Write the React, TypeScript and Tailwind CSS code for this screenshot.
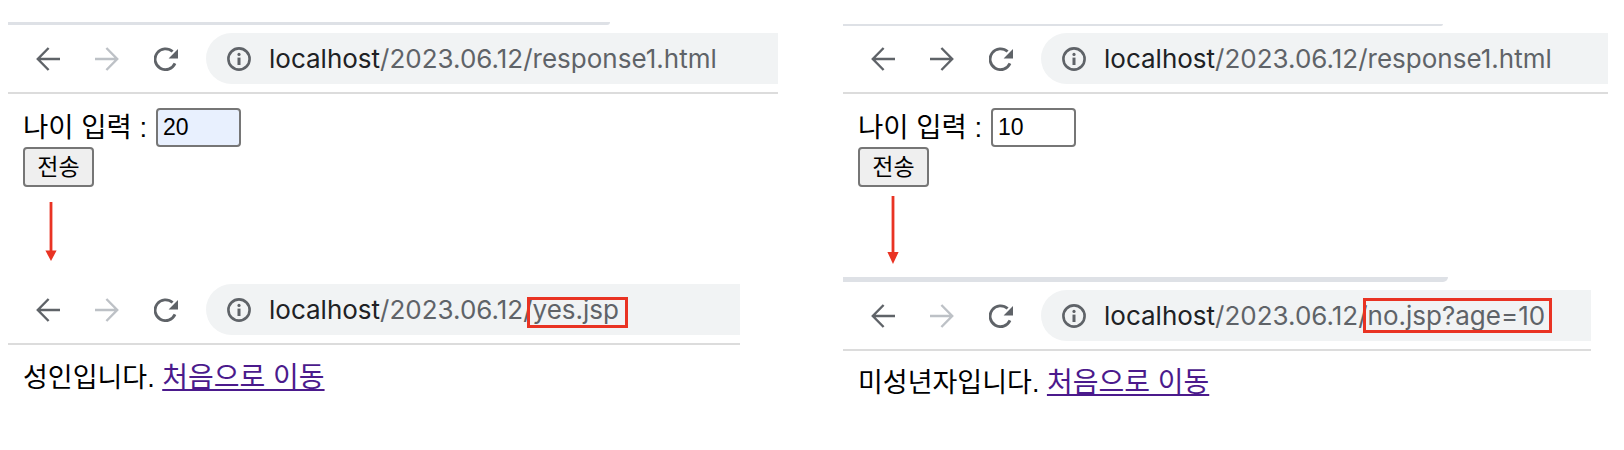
const KOREAN = "font-['Liberation_Sans','Noto_Sans_CJK_KR',sans-serif]";

function BackIcon({ className }: { className: string }) {
  return (
    <svg viewBox="0 0 24 24" fill="none" stroke="currentColor" strokeWidth="2.4" className={className}>
      <path d="M24 12H1.8M12.6 1 1.8 12l10.8 11" />
    </svg>
  );
}

function ForwardIcon({ className }: { className: string }) {
  return (
    <svg viewBox="0 0 24 24" fill="none" stroke="currentColor" strokeWidth="2.4" className={className}>
      <path d="M0 12h22.2M11.4 1l10.8 11-10.8 11" />
    </svg>
  );
}

function ReloadIcon() {
  return (
    <svg viewBox="0 0 24 24" className="h-6 w-6 text-[#5f6368]">
      <path fill="none" stroke="currentColor" strokeWidth="2.8" d="M21 16.4A10.4 10.4 0 1 1 18.6 4.6" />
      <path fill="currentColor" d="M25 1v10.4H14.6z" />
    </svg>
  );
}

function InfoIcon() {
  return (
    <svg viewBox="0 0 24 24" className="h-6 w-6 shrink-0 text-[#5f6368]">
      <circle cx="12" cy="12" r="10.6" fill="none" stroke="currentColor" strokeWidth="2.6" />
      <circle cx="12" cy="7.4" r="1.6" fill="currentColor" />
      <rect x="10.5" y="10.6" width="3" height="7.4" fill="currentColor" />
    </svg>
  );
}

function Toolbar({ path, forwardOn, width, mark }: { path: string; forwardOn?: boolean; width: string; mark?: React.ReactNode }) {
  return (
    <div className={`${width} border-b-2 border-[#dcdcdc] pb-2`}>
      <div className="flex h-[51px] items-center pl-7">
        <BackIcon className="h-6 w-6 text-[#5f6368]" />
        <ForwardIcon className={`ml-[35px] h-6 w-6 ${forwardOn ? "text-[#5f6368]" : "text-[#bdc1c6]"}`} />
        <div className="ml-[35px]">
          <ReloadIcon />
        </div>
        <div className="relative ml-7 flex h-full flex-1 items-center rounded-l-full bg-[#f1f3f4] pl-[21px]">
          <InfoIcon />
          <span className="ml-[18px] font-['Inter',sans-serif] text-[26px] whitespace-nowrap text-[#5f6368]">
            <span className="text-[#202124]">localhost</span>
            {path}
          </span>
          {mark}
        </div>
      </div>
    </div>
  );
}

function DownArrow({ className }: { className: string }) {
  return (
    <svg viewBox="0 0 12 68" preserveAspectRatio="none" className={`w-3 ${className}`}>
      <rect x="4.6" y="0" width="2.8" height="60" fill="#e93323" />
      <path d="M.4 56h11.2L6 68z" fill="#e93323" />
    </svg>
  );
}

function AgeForm({ value, autofilled }: { value: string; autofilled?: boolean }) {
  return (
    <div className={`${KOREAN} px-[15px] text-black`}>
      <div className="mt-3.5 flex h-[39px] items-center">
        <span className="w-[133px] text-[27.5px] whitespace-nowrap">나이 입력 :</span>
        <div className={`flex h-[39px] w-[85px] items-center rounded-[4px] border-2 border-[#767676] pl-[5px] text-[23px] ${autofilled ? "bg-[#e8f0fe]" : "bg-white"}`}>
          {value}
        </div>
      </div>
      <div className="flex h-10 w-[71px] items-center justify-center rounded-[4px] border-2 border-[#767676] bg-[#efefef] text-[23px]">
        전송
      </div>
    </div>
  );
}

function Result({ message, className }: { message: string; className: string }) {
  return (
    <p className={`${KOREAN} px-[15px] text-[27px] leading-[34px] whitespace-nowrap text-black ${className}`}>
      {message} <a className="text-[28px] text-[#4b1a8c] underline">처음으로 이동</a>
    </p>
  );
}

function RedBox({ className }: { className: string }) {
  return <div className={`absolute border-[3px] border-[#e93323] ${className}`} />;
}

export default function App() {
  return (
    <div className="flex h-[450px] w-[1624px] bg-white">
      <section className="ml-2 w-[770px]">
        <div className="mt-[22px] h-[3px] w-[602px] rounded-br-xl bg-[#dee1e6]" />
        <div className="mt-2">
          <Toolbar path="/2023.06.12/response1.html" width="w-full" />
        </div>
        <AgeForm value="20" autofilled />
        <div className="ml-[37px] mt-[15px]">
          <DownArrow className="h-[59px]" />
        </div>
        <div className="mt-[23px]">
          <Toolbar
            path="/2023.06.12/yes.jsp"
            width="w-[732px]"
            mark={<RedBox className="left-[321px] top-[13px] h-[31px] w-[101px]" />}
          />
        </div>
        <Result message="성인입니다." className="mt-4" />
      </section>

      <section className="ml-[65px] w-[765px]">
        <div className="mt-6 h-0.5 w-[600px] rounded-br-xl bg-[#dee1e6]" />
        <div className="mt-[7px]">
          <Toolbar path="/2023.06.12/response1.html" forwardOn width="w-full" />
        </div>
        <AgeForm value="10" />
        <div className="ml-11 mt-[9px]">
          <DownArrow className="h-[68px]" />
        </div>
        <div className="mt-[13px] h-[5px] w-[605px] rounded-br-xl bg-[#dee1e6]" />
        <div className="mt-2">
          <Toolbar
            path="/2023.06.12/no.jsp?age=10"
            width="w-[748px]"
            mark={<RedBox className="left-[322px] top-2 h-[35px] w-[189px]" />}
          />
        </div>
        <Result message="미성년자입니다." className="mt-[15px]" />
      </section>
    </div>
  );
}
